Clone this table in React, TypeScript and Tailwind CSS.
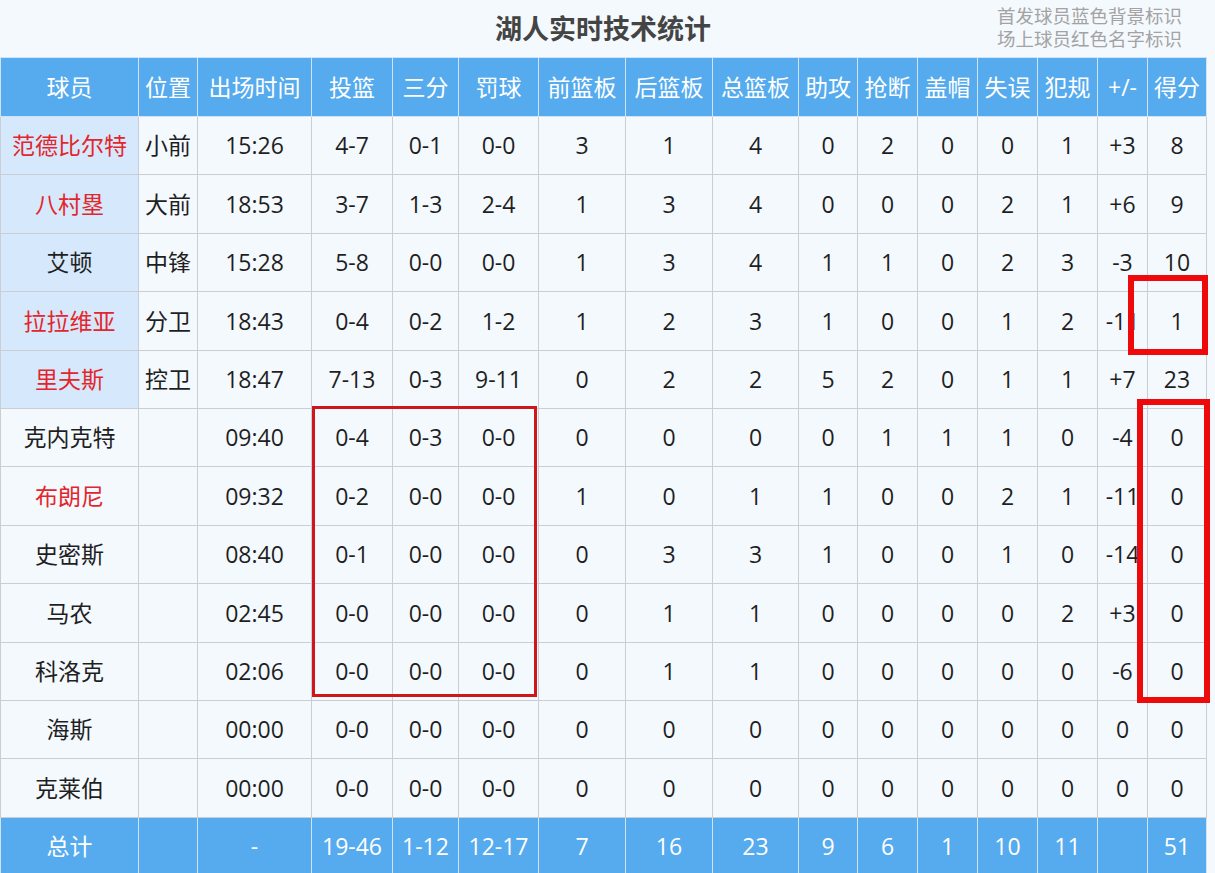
import React from 'react';

type Row = { name: string; pos: string; starter: boolean; onCourt: boolean; stats: string[] };

const HEAD = ['球员', '位置', '出场时间', '投篮', '三分', '罚球', '前篮板', '后篮板', '总篮板', '助攻', '抢断', '盖帽', '失误', '犯规', '+/-', '得分'];
const WIDTHS = [138, 59, 114, 81, 66, 80, 87, 87, 86, 59, 60, 60, 60, 60, 50, 59];

const ROWS: Row[] = [
  { name: '范德比尔特', pos: '小前', starter: true, onCourt: true, stats: ['15:26', '4-7', '0-1', '0-0', '3', '1', '4', '0', '2', '0', '0', '1', '+3', '8'] },
  { name: '八村塁', pos: '大前', starter: true, onCourt: true, stats: ['18:53', '3-7', '1-3', '2-4', '1', '3', '4', '0', '0', '0', '2', '1', '+6', '9'] },
  { name: '艾顿', pos: '中锋', starter: true, onCourt: false, stats: ['15:28', '5-8', '0-0', '0-0', '1', '3', '4', '1', '1', '0', '2', '3', '-3', '10'] },
  { name: '拉拉维亚', pos: '分卫', starter: true, onCourt: true, stats: ['18:43', '0-4', '0-2', '1-2', '1', '2', '3', '1', '0', '0', '1', '2', '-11', '1'] },
  { name: '里夫斯', pos: '控卫', starter: true, onCourt: true, stats: ['18:47', '7-13', '0-3', '9-11', '0', '2', '2', '5', '2', '0', '1', '1', '+7', '23'] },
  { name: '克内克特', pos: '', starter: false, onCourt: false, stats: ['09:40', '0-4', '0-3', '0-0', '0', '0', '0', '0', '1', '1', '1', '0', '-4', '0'] },
  { name: '布朗尼', pos: '', starter: false, onCourt: true, stats: ['09:32', '0-2', '0-0', '0-0', '1', '0', '1', '1', '0', '0', '2', '1', '-11', '0'] },
  { name: '史密斯', pos: '', starter: false, onCourt: false, stats: ['08:40', '0-1', '0-0', '0-0', '0', '3', '3', '1', '0', '0', '1', '0', '-14', '0'] },
  { name: '马农', pos: '', starter: false, onCourt: false, stats: ['02:45', '0-0', '0-0', '0-0', '0', '1', '1', '0', '0', '0', '0', '2', '+3', '0'] },
  { name: '科洛克', pos: '', starter: false, onCourt: false, stats: ['02:06', '0-0', '0-0', '0-0', '0', '1', '1', '0', '0', '0', '0', '0', '-6', '0'] },
  { name: '海斯', pos: '', starter: false, onCourt: false, stats: ['00:00', '0-0', '0-0', '0-0', '0', '0', '0', '0', '0', '0', '0', '0', '0', '0'] },
  { name: '克莱伯', pos: '', starter: false, onCourt: false, stats: ['00:00', '0-0', '0-0', '0-0', '0', '0', '0', '0', '0', '0', '0', '0', '0', '0'] },
];

const TOTAL = ['总计', '', '-', '19-46', '1-12', '12-17', '7', '16', '23', '9', '6', '1', '10', '11', '', '51'];

export default function App() {
  return (
    <div
      className="relative h-[873px] w-[1215px] overflow-hidden bg-[#f4f9fe] text-[#1f1f1f]"
      style={{ fontFamily: '"Open Sans", "Noto Sans CJK SC", sans-serif' }}
    >
      <div className="relative flex h-[57px] w-[1206px] items-center justify-center">
        <h1 className="text-[27px] font-bold leading-none text-[#444]">湖人实时技术统计</h1>
        <div className="absolute right-[24px] top-[4px] text-right text-[18.5px] leading-[23px] text-[#a3a3a3]">
          <div>首发球员蓝色背景标识</div>
          <div>场上球员红色名字标识</div>
        </div>
      </div>

      <table className="w-[1206px] table-fixed border-collapse text-center text-[23px]">
        <colgroup>
          {WIDTHS.map((w, i) => <col key={i} style={{ width: w }} />)}
        </colgroup>
        <thead>
          <tr className="h-[59px] bg-[#55abee] text-white">
            {HEAD.map((h) => (
              <th key={h} className="whitespace-nowrap border border-[#cfe3f5] px-0 font-normal">{h}</th>
            ))}
          </tr>
        </thead>
        <tbody>
          {ROWS.map((r) => (
            <tr key={r.name} className="h-[58.4px]">
              <td className={`whitespace-nowrap border border-[#c9cdd4] ${r.starter ? 'bg-[#d6e8fb]' : ''} ${r.onCourt ? 'text-[#e3262b]' : ''}`}>{r.name}</td>
              <td className="whitespace-nowrap border border-[#c9cdd4]">{r.pos}</td>
              {r.stats.map((s, i) => (
                <td key={i} className="whitespace-nowrap border border-[#c9cdd4]">{s}</td>
              ))}
            </tr>
          ))}
          <tr className="h-[58px] bg-[#55abee] text-white">
            {TOTAL.map((t, i) => (
              <td key={i} className="whitespace-nowrap border border-[#cfe3f5]">{t}</td>
            ))}
          </tr>
        </tbody>
      </table>

      {/* annotation boxes */}
      <div className="pointer-events-none absolute left-[312px] top-[406px] h-[291px] w-[225px] border-[3px] border-[#d0161d]" />
      <div className="pointer-events-none absolute left-[1128px] top-[275px] h-[80px] w-[80px] border-[6px] border-[#ee0a0a]" />
      <div className="pointer-events-none absolute left-[1137px] top-[399px] h-[304px] w-[73px] border-[6px] border-[#ee0a0a]" />
    </div>
  );
}
